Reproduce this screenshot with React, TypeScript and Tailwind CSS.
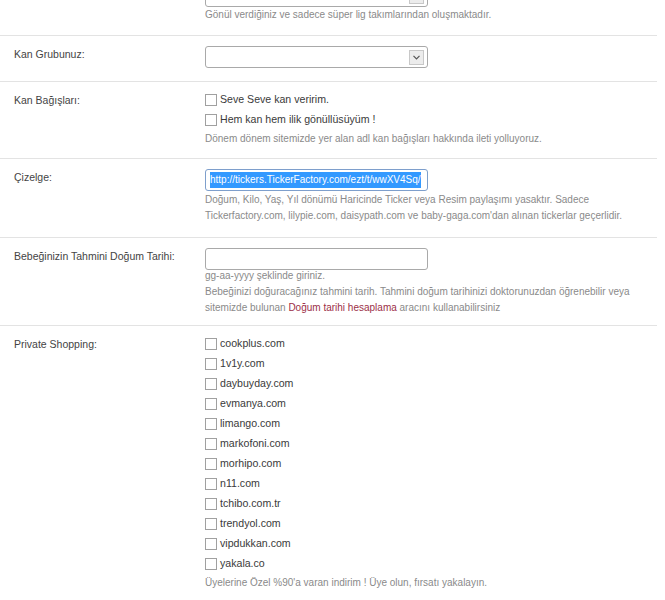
const shops = [
  "cookplus.com",
  "1v1y.com",
  "daybuyday.com",
  "evmanya.com",
  "limango.com",
  "markofoni.com",
  "morhipo.com",
  "n11.com",
  "tchibo.com.tr",
  "trendyol.com",
  "vipdukkan.com",
  "yakala.co",
];

function Row({ label, children, className = "" }: { label?: string; children: React.ReactNode; className?: string }) {
  return (
    <div className={`flex border-b border-[#e3e3e3] pl-[14px] pt-[10px] ${className}`}>
      <div className="w-[191px] shrink-0 text-[10.5px] leading-[16px] text-[#444]">{label}</div>
      <div className="min-w-0 flex-1">{children}</div>
    </div>
  );
}

function Help({ children, className = "" }: { children: React.ReactNode; className?: string }) {
  return <p className={`text-[10px] leading-[16px] text-[#8a8a8a] ${className}`}>{children}</p>;
}

function Check({ label }: { label: string }) {
  return (
    <label className="flex h-[16px] items-center gap-[3px] text-[10.6px] text-[#3a3a3a]">
      <span className="h-[12px] w-[12px] shrink-0 border border-[#a0a0a0] bg-white" />
      <span>{label}</span>
    </label>
  );
}

function SelectBox() {
  return (
    <div className="flex h-[22px] w-[223px] items-center justify-end rounded-[3px] border border-[#a9a9a9] bg-white pr-[3px]">
      <span className="flex h-[15px] w-[15px] items-center justify-center border border-[#c8c8c8] bg-[#ececec]">
        <svg width="7" height="5" viewBox="0 0 7 5">
          <path d="M0.5 0.8 L3.5 3.8 L6.5 0.8" fill="none" stroke="#555" strokeWidth="1.2" />
        </svg>
      </span>
    </div>
  );
}

export default function App() {
  return (
    <div className="h-[600px] w-[665px] overflow-hidden bg-white font-['Liberation_Sans',Arial,sans-serif]">
      <div className="w-[657px] -mt-[25px]">
        <Row className="pb-[12px]">
          <SelectBox />
          <Help>Gönül verdiğiniz ve sadece süper lig takımlarından oluşmaktadır.</Help>
        </Row>

        <Row label="Kan Grubunuz:" className="pb-[13px]">
          <SelectBox />
        </Row>

        <Row label="Kan Bağışları:" className="pb-[11px]">
          <div className="flex flex-col gap-[4px]">
            <Check label="Seve Seve kan veririm." />
            <Check label="Hem kan hem ilik gönüllüsüyüm !" />
          </div>
          <Help className="mt-[3px]">Dönem dönem sitemizde yer alan adl kan bağışları hakkında ileti yolluyoruz.</Help>
        </Row>

        <Row label="Çizelge:" className="pb-[13px]">
          <div className="flex h-[22px] w-[223px] items-center overflow-hidden rounded-[3px] border border-[#7e9fcc] bg-white pl-[4px]">
            <span className="whitespace-nowrap bg-[#3399ff] text-[10px] leading-[16px] text-white">
              http://tickers.TickerFactory.com/ezt/t/wwXV4Sq/
            </span>
          </div>
          <Help className="mt-[1px]">
            Doğum, Kilo, Yaş, Yıl dönümü Haricinde Ticker veya Resim paylaşımı yasaktır. Sadece
            <br />
            Tickerfactory.com, lilypie.com, daisypath.com ve baby-gaga.com'dan alınan tickerlar geçerlidir.
          </Help>
        </Row>

        <Row label="Bebeğinizin Tahmini Doğum Tarihi:" className="pb-[9px]">
          <div className="h-[22px] w-[223px] rounded-[3px] border border-[#a9a9a9] bg-white" />
          <Help className="-mt-[2px]">
            gg-aa-yyyy şeklinde giriniz.
            <br />
            Bebeğinizi doğuracağınız tahmini tarih. Tahmini doğum tarihinizi doktorunuzdan öğrenebilir veya
            <br />
            sitemizde bulunan <span className="text-[#9c2f47]">Doğum tarihi hesaplama</span> aracını kullanabilirsiniz
          </Help>
        </Row>

        <Row label="Private Shopping:" className="border-b-0 pb-[12px]">
          <div className="flex flex-col gap-[4px]">
            {shops.map((s) => (
              <Check key={s} label={s} />
            ))}
          </div>
          <Help className="mt-[3px]">Üyelerine Özel %90'a varan indirim ! Üye olun, fırsatı yakalayın.</Help>
        </Row>
      </div>
    </div>
  );
}
